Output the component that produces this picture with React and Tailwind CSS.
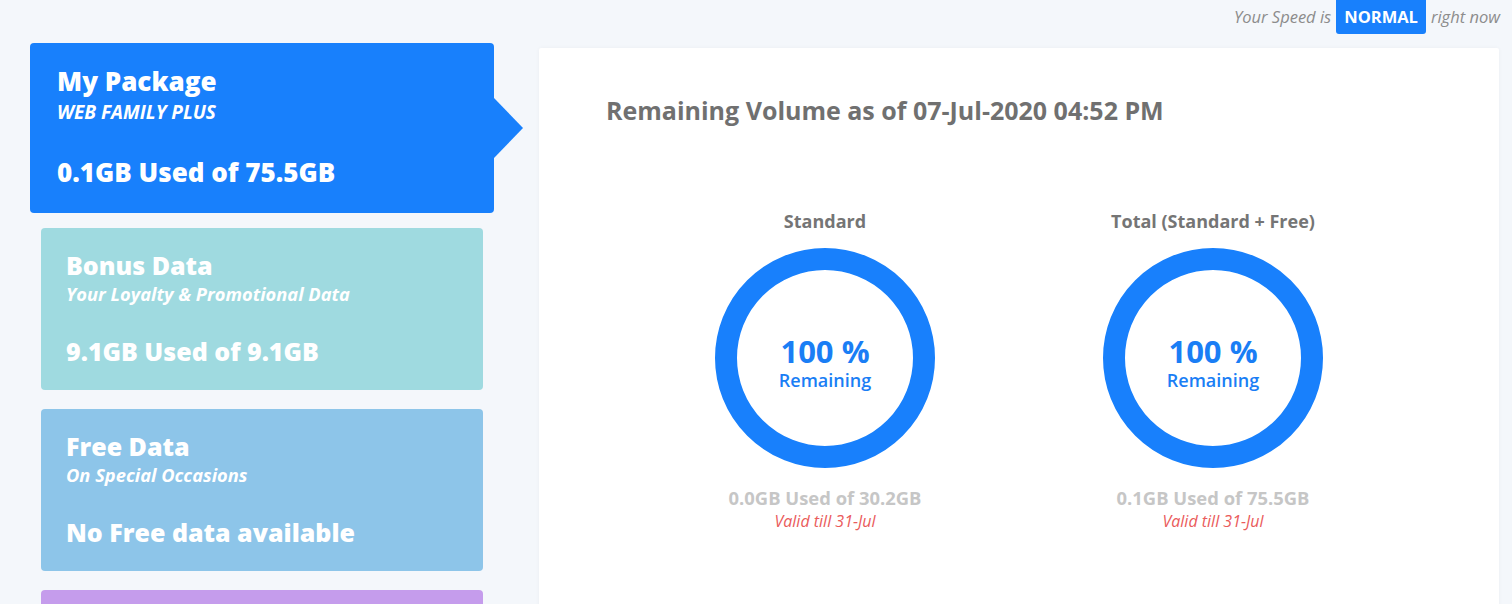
export default function App() {
  const cards = [
    {
      title: "Bonus Data",
      sub: "Your Loyalty & Promotional Data",
      value: "9.1GB Used of 9.1GB",
      bg: "bg-[#9fdae0]",
    },
    {
      title: "Free Data",
      sub: "On Special Occasions",
      value: "No Free data available",
      bg: "bg-[#8dc5e9]",
    },
    {
      title: "Add-ons",
      sub: "Extra Data Bundles",
      value: "No Add-ons available",
      bg: "bg-[#c59cec]",
    },
  ];

  const charts = [
    { label: "Standard", used: "0.0GB Used of 30.2GB" },
    { label: "Total (Standard + Free)", used: "0.1GB Used of 75.5GB" },
  ];

  return (
    <div
      className="min-h-screen bg-[#f4f7fb] overflow-hidden"
      style={{ fontFamily: '"Open Sans", "Liberation Sans", sans-serif' }}
    >
      {/* Speed bar */}
      <div className="h-[43px] flex justify-end items-start pr-[12px]">
        <div className="flex items-center gap-[5px] text-[16.5px] italic font-medium text-[#8c8c8c]">
          <span>Your Speed is</span>
          <span className="h-[34px] px-[8px] flex items-center bg-[#1880fc] text-white not-italic font-bold rounded-b-[3px]">
            NORMAL
          </span>
          <span>right now</span>
        </div>
      </div>

      <div className="flex items-start">
        {/* Left column */}
        <div className="w-[494px] pl-[30px] shrink-0 flex flex-col">
          <div className="relative w-[464px] h-[170px] bg-[#1880fc] rounded-[4px] px-[27px] pt-[21px] text-white">
            <div className="text-[26px] leading-[34px] font-extrabold">My Package</div>
            <div className="mt-[2px] text-[19px] leading-[24px] italic font-bold">
              WEB FAMILY PLUS
            </div>
            <div className="mt-[31px] text-[26px] leading-[34px] font-extrabold">
              0.1GB Used of 75.5GB
            </div>
            <div className="absolute left-full top-1/2 -translate-y-1/2 w-0 h-0 border-y-[30px] border-y-transparent border-l-[29px] border-l-[#1880fc]" />
          </div>

          {cards.map((c, i) => (
            <div
              key={c.title}
              className={`mx-[11px] h-[162px] rounded-[4px] px-[25px] pt-[21px] text-white ${c.bg} ${
                i === 0 ? "mt-[15px]" : "mt-[19px]"
              }`}
            >
              <div className="text-[25px] leading-[32px] font-extrabold">{c.title}</div>
              <div className="mt-[1px] text-[18.3px] leading-[24px] italic font-bold">
                {c.sub}
              </div>
              <div className="mt-[29px] text-[25px] leading-[32px] font-extrabold">{c.value}</div>
            </div>
          ))}
        </div>

        {/* Right panel */}
        <div className="ml-[45px] mt-[5px] w-[960px] h-[700px] bg-white rounded-[2px] shadow-[0_0_4px_rgba(0,0,0,0.04)] pt-[46px]">
          <h2 className="pl-[67px] text-[25px] leading-[32px] font-bold text-[#707070]">
            Remaining Volume as of 07-Jul-2020 04:52 PM
          </h2>

          <div className="mt-[83px] flex justify-center">
            {charts.map((c) => (
              <div key={c.label} className="w-[388px] flex flex-col items-center">
                <div className="text-[18px] leading-[24px] font-bold text-[#757575]">
                  {c.label}
                </div>
                <div className="mt-[15px] w-[220px] h-[220px] rounded-full border-[22px] border-[#1880fc] flex flex-col items-center justify-center pt-[10px] text-[#1a7ef5]">
                  <div className="text-[31px] leading-[34px] font-bold">100 %</div>
                  <div className="text-[18px] leading-[24px] font-semibold">Remaining</div>
                </div>
                <div className="mt-[18px] text-[18.4px] leading-[24px] font-bold text-[#c6c6c6]">
                  {c.used}
                </div>
                <div className="mt-[1px] text-[16px] leading-[20px] italic text-[#ea5b5b]">
                  Valid till 31-Jul
                </div>
              </div>
            ))}
          </div>
        </div>
      </div>
    </div>
  );
}
